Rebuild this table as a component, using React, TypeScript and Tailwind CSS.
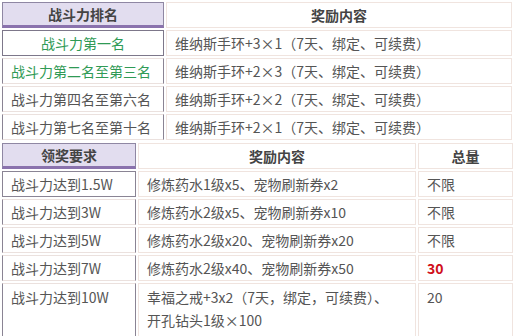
const font = { fontFamily: '"Microsoft YaHei", "Noto Sans CJK SC", "Noto Sans", sans-serif' };

const rankRows = [
  { label: '战斗力第一名', reward: '维纳斯手环+3×1（7天、绑定、可续费）', tone: 'first' },
  { label: '战斗力第二名至第三名', reward: '维纳斯手环+2×3（7天、绑定、可续费）', tone: 'green' },
  { label: '战斗力第四名至第六名', reward: '维纳斯手环+2×2（7天、绑定、可续费）', tone: 'plain' },
  { label: '战斗力第七名至第十名', reward: '维纳斯手环+2×1（7天、绑定、可续费）', tone: 'plain' },
];

const powerRows = [
  { need: '战斗力达到1.5W', reward: '修炼药水1级x5、宠物刷新券x2', total: '不限' },
  { need: '战斗力达到3W', reward: '修炼药水2级x5、宠物刷新券x10', total: '不限' },
  { need: '战斗力达到5W', reward: '修炼药水2级x20、宠物刷新券x20', total: '不限' },
  { need: '战斗力达到7W', reward: '修炼药水2级x40、宠物刷新券x50', total: '30', hot: true },
];

const headCell =
  'h-[26px] flex items-center justify-center bg-[#e2ddef] border border-[#8f87a3] border-b-[3px] border-b-[#8a72ad] text-[14px] font-bold text-[#444]';
const plainHead =
  'h-[26px] flex items-center justify-center bg-white border border-[#f0e4df] text-[14px] font-bold text-[#444]';
const leftBase = 'h-[26px] flex items-center px-2 border border-x-[#8a8494] text-[14px] bg-white';
const rightCell =
  'h-[26px] flex items-center px-2 border border-[#f0e4df] text-[14px] text-[#555] bg-white';

export default function App() {
  return (
    <div className="w-[516px] h-[336px] overflow-hidden bg-white" style={font}>
      <div className="ml-[2px] mt-[2px] grid grid-cols-[162px_346px] gap-[2px]">
        <div className={headCell}>战斗力排名</div>
        <div className={plainHead}>奖励内容</div>
        {rankRows.map((r, i) => (
          <div key={r.label} className="contents">
            <div
              className={
                i === 0
                  ? 'h-[26px] flex items-center justify-center border border-[#7d778a] text-[14px] text-[#2f9a55] bg-white'
                  : r.tone === 'green'
                    ? `${leftBase} border-y-[#ebe1de] text-[#2f9a55]`
                    : `${leftBase} border-y-[#ebe1de] text-[#555]`
              }
            >
              {r.label}
            </div>
            <div className={rightCell}>{r.reward}</div>
          </div>
        ))}
      </div>

      <div className="ml-[2px] mt-[3px] grid grid-cols-[134px_278px_95px] gap-[2px]">
        <div className={headCell}>领奖要求</div>
        <div className={plainHead}>奖励内容</div>
        <div className={plainHead}>总量</div>
        {powerRows.map((r, i) => (
          <div key={r.need} className="contents">
            <div
              className={
                i === 0
                  ? `${leftBase} border-y-[#8a8494] text-[#555]`
                  : `${leftBase} border-y-[#ebe1de] text-[#555]`
              }
            >
              {r.need}
            </div>
            <div className={rightCell}>{r.reward}</div>
            <div className={rightCell}>
              {r.hot ? <span className="font-bold text-[#d0101a]">{r.total}</span> : r.total}
            </div>
          </div>
        ))}
        <div className="h-[60px] px-2 pt-[2px] leading-[23px] border border-x-[#8a8494] border-y-[#ebe1de] text-[14px] text-[#555]">
          战斗力达到10W
        </div>
        <div className="h-[60px] px-2 pt-[2px] leading-[23px] border border-[#f0e4df] text-[14px] text-[#555]">
          幸福之戒+3x2（7天，绑定，可续费）、
          <br />
          开孔钻头1级×100
        </div>
        <div className="h-[60px] px-2 pt-[2px] leading-[23px] border border-[#f0e4df] text-[14px] text-[#555]">
          20
        </div>
      </div>
    </div>
  );
}
